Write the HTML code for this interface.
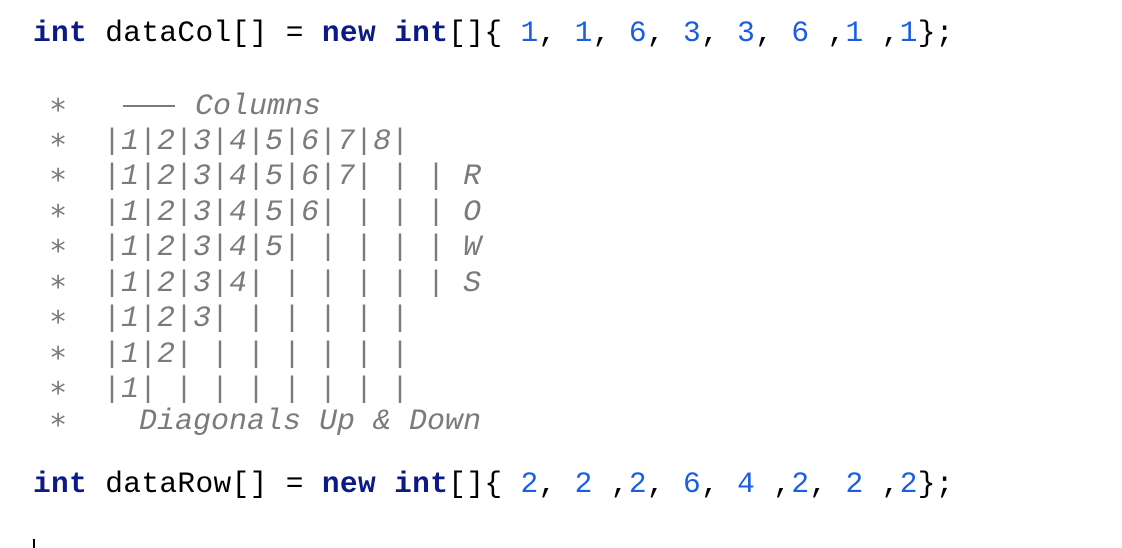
<!DOCTYPE html>
<html><head><style>
body{margin:0;width:1122px;height:548px;background:#fff;position:relative;overflow:hidden}
.l{position:absolute;white-space:pre;font-family:"Liberation Mono",monospace;line-height:36px;height:36px}
.c{font-size:29.5px;color:#000;left:33px;letter-spacing:0.35px}
.k{color:#0b1a86;font-weight:bold}
.n{color:#1a5fe3}
.m{font-size:30px;color:#7b7b7b;left:49px;font-style:italic}
.s{font-style:normal;font-family:"DejaVu Sans Mono",monospace;font-size:30px;display:inline-block;width:18px;text-align:center}
.d{display:inline-block;width:52px;border-top:2px solid #7b7b7b;vertical-align:middle;margin-left:2px;margin-right:2px}
</style></head><body>
<div class="l c" style="top:15px"><span class="k">int</span> dataCol[] = <span class="k">new</span> <span class="k">int</span>[]{ <span class="n">1</span>, <span class="n">1</span>, <span class="n">6</span>, <span class="n">3</span>, <span class="n">3</span>, <span class="n">6</span> ,<span class="n">1</span> ,<span class="n">1</span>};</div>
<div class="l m" style="top:87px"><span class="s">∗</span>   <span class="d"></span> Columns</div>
<div class="l m" style="top:122px"><span class="s">∗</span>  |1|2|3|4|5|6|7|8|</div>
<div class="l m" style="top:157px"><span class="s">∗</span>  |1|2|3|4|5|6|7| | | R</div>
<div class="l m" style="top:193px"><span class="s">∗</span>  |1|2|3|4|5|6| | | | O</div>
<div class="l m" style="top:228px"><span class="s">∗</span>  |1|2|3|4|5| | | | | W</div>
<div class="l m" style="top:264px"><span class="s">∗</span>  |1|2|3|4| | | | | | S</div>
<div class="l m" style="top:299px"><span class="s">∗</span>  |1|2|3| | | | | |</div>
<div class="l m" style="top:335px"><span class="s">∗</span>  |1|2| | | | | | |</div>
<div class="l m" style="top:370px"><span class="s">∗</span>  |1| | | | | | | |</div>
<div class="l m" style="top:402px"><span class="s">∗</span>    Diagonals Up &amp; Down</div>
<div class="l c" style="top:466px"><span class="k">int</span> dataRow[] = <span class="k">new</span> <span class="k">int</span>[]{ <span class="n">2</span>, <span class="n">2</span> ,<span class="n">2</span>, <span class="n">6</span>, <span class="n">4</span> ,<span class="n">2</span>, <span class="n">2</span> ,<span class="n">2</span>};</div>
<div style="position:absolute;left:33px;top:539px;width:2px;height:9px;background:#000"></div>
</body></html>
